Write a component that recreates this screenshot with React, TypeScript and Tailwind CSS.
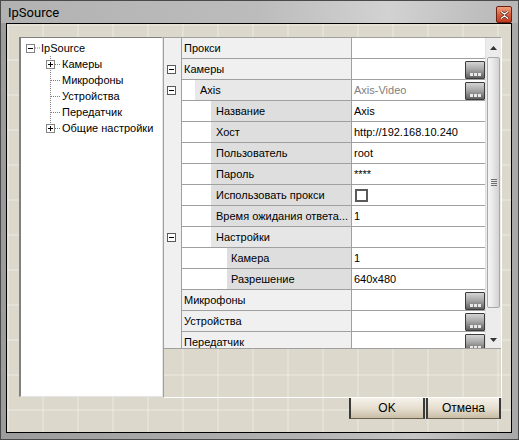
import React from "react";

type Row = {
  t: "cat" | "grp" | "leaf" | "grp2" | "sub";
  name: string;
  minus?: boolean;
  value?: string;
  gray?: boolean;
  btn?: boolean;
  check?: boolean;
};

const rows: Row[] = [
  { t: "cat", name: "Прокси" },
  { t: "cat", name: "Камеры", minus: true, btn: true },
  { t: "grp", name: "Axis", minus: true, value: "Axis-Video", gray: true, btn: true },
  { t: "leaf", name: "Название", value: "Axis" },
  { t: "leaf", name: "Хост", value: "http://192.168.10.240" },
  { t: "leaf", name: "Пользователь", value: "root" },
  { t: "leaf", name: "Пароль", value: "****" },
  { t: "leaf", name: "Использовать прокси", check: true },
  { t: "leaf", name: "Время ожидания ответа...", value: "1" },
  { t: "grp2", name: "Настройки", minus: true },
  { t: "sub", name: "Камера", value: "1" },
  { t: "sub", name: "Разрешение", value: "640x480" },
  { t: "cat", name: "Микрофоны", btn: true },
  { t: "cat", name: "Устройства", btn: true },
  { t: "cat", name: "Передатчик", btn: true },
];

function GridMinus() {
  return (
    <div className="w-[9px] h-[9px] border border-[#5a5a5a] bg-white flex items-center justify-center">
      <div className="w-[5px] h-px bg-black" />
    </div>
  );
}

function TreeBox({ plus }: { plus?: boolean }) {
  return (
    <svg width="9" height="9" viewBox="0 0 9 9" className="block shrink-0">
      <rect x="0.5" y="0.5" width="8" height="8" fill="white" stroke="#848484" />
      <line x1="2" y1="4.5" x2="7" y2="4.5" stroke="black" />
      {plus && <line x1="4.5" y1="2" x2="4.5" y2="7" stroke="black" />}
    </svg>
  );
}

function TreeChild({ label, plus, last, first }: { label: string; plus?: boolean; last?: boolean; first?: boolean }) {
  return (
    <div className="flex items-center h-[16px]">
      <div className="w-[25px] shrink-0" />
      <svg width="16" height="16" viewBox="0 0 16 16" className="block shrink-0">
        <line x1="4.5" y1={first ? -2 : 0} x2="4.5" y2={last ? 8 : 16} stroke="#808080" strokeDasharray="1 1" />
        <line x1="5" y1="8.5" x2="15" y2="8.5" stroke="#808080" strokeDasharray="1 1" />
        {plus && (
          <g>
            <rect x="0.5" y="4.5" width="8" height="8" fill="white" stroke="#848484" />
            <line x1="2" y1="8.5" x2="7" y2="8.5" stroke="black" />
            <line x1="4.5" y1="6" x2="4.5" y2="11" stroke="black" />
          </g>
        )}
      </svg>
      <span className="pl-[0px] whitespace-nowrap">{label}</span>
    </div>
  );
}

function EllipsisBtn() {
  return (
    <div className="w-[20px] h-[18px] border border-[#3c3c3c] rounded-[1px] bg-[linear-gradient(180deg,#d4d4d4_0%,#a8a8a8_45%,#606060_100%)] flex items-end justify-center gap-[1px] pb-[2px]">
      <div className="w-[3px] h-[3px] bg-[#e8e8e8]" />
      <div className="w-[3px] h-[3px] bg-[#e8e8e8]" />
      <div className="w-[3px] h-[3px] bg-[#e8e8e8]" />
    </div>
  );
}

function NameCell({ r }: { r: Row }) {
  if (r.t === "cat") {
    return <div className="w-[169px] h-full bg-[#f0f0f0] pl-[2px] flex items-center whitespace-nowrap">{r.name}</div>;
  }
  if (r.t === "grp") {
    return (
      <div className="w-[169px] h-full flex">
        <div className="w-[13px] h-full bg-white" />
        <div className="flex-1 h-full bg-[#e8e8e8] pl-[5px] flex items-center whitespace-nowrap">{r.name}</div>
      </div>
    );
  }
  if (r.t === "grp2") {
    return (
      <div className="w-[169px] h-full flex">
        <div className="w-[29px] h-full bg-white" />
        <div className="flex-1 h-full bg-[#e6e6e6] pl-[5px] flex items-center whitespace-nowrap">{r.name}</div>
      </div>
    );
  }
  if (r.t === "leaf") {
    return (
      <div className="w-[169px] h-full flex">
        <div className="w-[29px] h-full bg-white" />
        <div className="flex-1 h-full bg-[#dedede] pl-[5px] flex items-center whitespace-nowrap overflow-hidden">{r.name}</div>
      </div>
    );
  }
  return (
    <div className="w-[169px] h-full flex">
      <div className="w-[45px] h-full bg-white" />
      <div className="flex-1 h-full bg-[#dedede] pl-[4px] flex items-center whitespace-nowrap">{r.name}</div>
    </div>
  );
}

function ValueCell({ r }: { r: Row }) {
  return (
    <div className="w-[134px] h-full border-l border-[#a0a0a0] bg-white flex items-stretch">
      <div className="flex-1 pl-[2px] flex items-center whitespace-nowrap overflow-hidden">
        {r.check ? (
          <div className="w-[13px] h-[13px] border-2 border-[#5a5a5a] bg-white ml-[1px]" />
        ) : r.value ? (
          <span className={r.gray ? "text-[#808080]" : "text-black"}>{r.value}</span>
        ) : null}
      </div>
      {r.btn && (
        <div className="flex items-end">
          <EllipsisBtn />
        </div>
      )}
    </div>
  );
}

function GridRow({ r }: { r: Row }) {
  return (
    <div className="flex h-[21px] shrink-0">
      <div className="w-[18px] h-full bg-[#f0f0f0] border-r border-[#a0a0a0] flex items-center justify-center pr-[3px]">
        {r.minus && <GridMinus />}
      </div>
      <div className="flex-1 h-full border-b border-[#a0a0a0] flex">
        <NameCell r={r} />
        <ValueCell r={r} />
      </div>
    </div>
  );
}

function Scrollbar() {
  return (
    <div className="w-[16px] h-full bg-[#ececec] border-l border-[#e0e0e0] flex flex-col">
      <div className="h-[19px] flex items-center justify-center">
        <svg width="7" height="4" viewBox="0 0 7 4"><path d="M0 4 L3.5 0 L7 4 Z" fill="#333" /></svg>
      </div>
      <div className="h-[251px] mx-[1px] border border-[#a8a8a8] rounded-[2px] bg-[linear-gradient(90deg,#f6f6f6_0%,#e6e6e6_50%,#d2d2d2_100%)] flex items-center justify-center">
        <div className="flex flex-col gap-[1px]">
          <div className="w-[6px] h-px bg-[#707070]" />
          <div className="w-[6px] h-px bg-[#707070]" />
          <div className="w-[6px] h-px bg-[#707070]" />
          <div className="w-[6px] h-px bg-[#707070]" />
        </div>
      </div>
      <div className="flex-1" />
      <div className="h-[17px] flex items-center justify-center">
        <svg width="7" height="4" viewBox="0 0 7 4"><path d="M0 0 L3.5 4 L7 0 Z" fill="#333" /></svg>
      </div>
    </div>
  );
}

function DialogButton({ label, w }: { label: string; w: string }) {
  return (
    <div
      className={`${w} h-[21px] border-l-2 border-r-2 border-[#3a3a3a] border-b border-b-[#6a5f50] bg-[linear-gradient(180deg,#f6f2ea_0%,#e4dccd_55%,#c9bda6_100%)] flex items-center justify-center text-[12px] text-black`}
    >
      {label}
    </div>
  );
}

export default function App() {
  return (
    <div className="w-[519px] h-[440px] border border-[#4a4a4a] bg-[linear-gradient(90deg,#9c9c9c_0%,#b4b4b4_60%,#c6c6c6_80%,#a8a8a8_100%)] flex flex-col font-['Liberation_Sans',Arial,sans-serif] text-[11px] text-black">
      <div className="h-[22px] shrink-0 flex items-center justify-between pl-[7px] pr-[6px] bg-[linear-gradient(90deg,#b2b2b2_0%,#bcbcbc_50%,#d2d2d2_75%,#b6b6b6_100%)]">
        <span className="text-[13px] font-['Roboto',sans-serif] text-black leading-none">IpSource</span>
        <div className="w-[16px] h-[17px] mt-[5px] border border-[#6b2010] rounded-[2px] bg-[linear-gradient(180deg,#f0a080_0%,#d86040_50%,#c03a20_100%)] flex items-center justify-center">
          <svg width="9" height="8" viewBox="0 0 9 8">
            <path d="M1 0.5 L4.5 3.2 L8 0.5 M1 7.5 L4.5 4.8 L8 7.5" stroke="#3a1a10" strokeWidth="2.6" fill="none" />
            <path d="M1 0.5 L4.5 3.2 L8 0.5 M1 7.5 L4.5 4.8 L8 7.5" stroke="white" strokeWidth="1.4" fill="none" />
          </svg>
        </div>
      </div>
      <div className="flex-1 ml-[5px] mr-[6px] mb-[6px] border border-black bg-[#dcd8cc] bg-[linear-gradient(rgba(255,255,255,0.22)_2px,transparent_2px),linear-gradient(90deg,rgba(255,255,255,0.22)_2px,transparent_2px)] bg-[length:35px_35px] pl-[12px] pt-[13px] flex flex-col">
        <div className="flex">
          <div className="w-[144px] h-[360px] bg-white border-l-2 border-t border-l-[#808080] border-t-[#808080] border-r border-b border-r-[#e4e4e4] border-b-[#e4e4e4] pt-[2px]">
            <div className="flex items-center h-[16px] pl-[5px]">
              <TreeBox />
              <svg width="6" height="2" className="block shrink-0">
                <line x1="0" y1="1" x2="6" y2="1" stroke="#808080" strokeDasharray="1 1" />
              </svg>
              <span className="whitespace-nowrap">IpSource</span>
            </div>
            <TreeChild label="Камеры" plus first />
            <TreeChild label="Микрофоны" />
            <TreeChild label="Устройства" />
            <TreeChild label="Передатчик" />
            <TreeChild label="Общие настройки" plus last />
          </div>
          <div className="w-[339px] h-[361px] border-l border-t border-[#a0a0a0] border-r border-b border-r-white border-b-white flex flex-col">
            <div className="h-[311px] border-b border-[#a0a0a0] flex bg-white">
              <div className="w-[321px] h-full overflow-hidden flex flex-col">
                {rows.map((r, i) => (
                  <GridRow key={i} r={r} />
                ))}
              </div>
              <Scrollbar />
            </div>
          </div>
        </div>
        <div className="flex w-[483px] justify-end gap-[1px] pr-[1px]">
          <DialogButton label="OK" w="w-[76px]" />
          <DialogButton label="Отмена" w="w-[75px]" />
        </div>
      </div>
    </div>
  );
}
